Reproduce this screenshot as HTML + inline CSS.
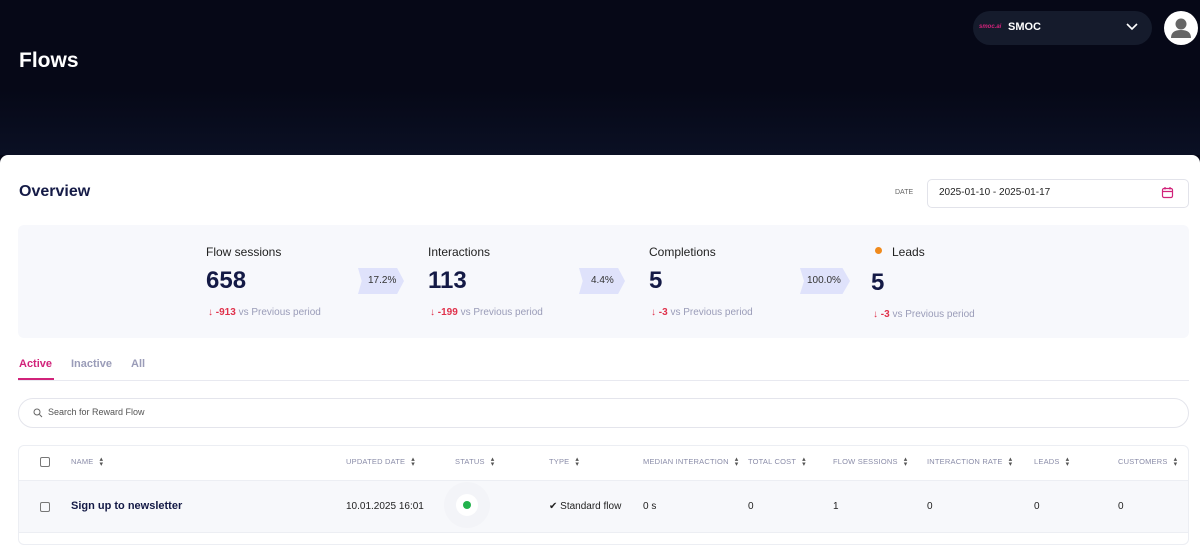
<!DOCTYPE html>
<html><head><meta charset="utf-8"><style>
*{box-sizing:border-box;margin:0;padding:0}
body{width:1200px;height:541px;overflow:hidden;background:#060817;font-family:"Liberation Sans",sans-serif;position:relative;color:#141a46}
.abs{position:absolute}
.panel{left:0;top:155px;width:1200px;height:400px;background:#fff;border-radius:8px 8px 0 0}
.lbl{font-size:12px;color:#222}
.num{font-size:24px;font-weight:bold;color:#141a46}
.cmp{font-size:10px;color:#9a9cb8}
.cmp b{color:#e0314b}
.arrow{background:#dfe2fb;font-size:10px;color:#333;height:26px;line-height:26px;padding-left:10px;width:46px;clip-path:polygon(0 0,85% 0,100% 50%,85% 100%,0 100%,8% 50%)}
.th{font-size:7.5px;color:#8a8ca8;top:457px;letter-spacing:.2px}
.td{font-size:10px;color:#222;top:501px}
.cb{width:10px;height:10px;border:1px solid #777;border-radius:2px}
.srt{font-size:7px;color:#555;line-height:5px;display:inline-block;vertical-align:middle;margin-left:6px}
</style></head><body>
<div class="abs" style="left:0;top:90px;width:1200px;height:65px;background:linear-gradient(#060817,#0b1024)"></div>
<div class="abs" style="left:19px;top:49px;font-size:21px;font-weight:bold;color:#fff">Flows</div>
<div class="abs" style="left:973px;top:11px;width:179px;height:34px;border-radius:17px;background:#151b2c"></div>
<div class="abs" style="left:979px;top:24px;font-size:6px;font-weight:bold;color:#d1237a;font-style:italic">smoc.ai</div>
<div class="abs" style="left:1008px;top:21px;font-size:11px;font-weight:bold;color:#fff">SMOC</div>
<svg class="abs" style="left:1125px;top:22px" width="14" height="10"><path d="M2 2 L7 7 L12 2" stroke="#fff" stroke-width="1.6" fill="none"/></svg>
<div class="abs" style="left:1164px;top:11px;width:34px;height:34px;border-radius:50%;background:#fff;overflow:hidden"><svg width="34" height="34"><circle cx="17" cy="13" r="5.5" fill="#666"/><path d="M7 27 Q7 19 17 19 Q27 19 27 27 Z" fill="#666"/></svg></div>
<div class="abs panel"></div>
<div class="abs" style="left:19px;top:183px;font-size:16px;font-weight:bold">Overview</div>
<div class="abs" style="left:895px;top:189px;font-size:7px;color:#666">DATE</div>
<div class="abs" style="left:927px;top:179px;width:262px;height:29px;border:1px solid #e2e3ea;border-radius:5px"></div>
<div class="abs" style="left:939px;top:187px;font-size:10px;color:#222">2025-01-10 - 2025-01-17</div>
<svg class="abs" style="left:1161px;top:186px" width="13" height="13"><rect x="1.5" y="2.5" width="10" height="9" rx="1.5" stroke="#d1237a" fill="none" stroke-width="1.2"/><path d="M1.5 5.5H11.5M4 1V3.5M9 1V3.5" stroke="#d1237a" stroke-width="1.2"/></svg>
<div class="abs" style="left:18px;top:225px;width:1171px;height:113px;background:#f7f8fc;border-radius:6px"></div>
<div class="abs lbl" style="left:206px;top:245px">Flow sessions</div>
<div class="abs num" style="left:206px;top:267px">658</div>
<div class="abs cmp" style="left:208px;top:307px"><b>↓ -913</b> vs Previous period</div>
<div class="abs arrow" style="left:358px;top:268px">17.2%</div>
<div class="abs lbl" style="left:428px;top:245px">Interactions</div>
<div class="abs num" style="left:428px;top:267px">113</div>
<div class="abs cmp" style="left:430px;top:307px"><b>↓ -199</b> vs Previous period</div>
<div class="abs arrow" style="left:579px;top:268px;padding-left:12px">4.4%</div>
<div class="abs lbl" style="left:649px;top:245px">Completions</div>
<div class="abs num" style="left:649px;top:267px">5</div>
<div class="abs cmp" style="left:651px;top:307px"><b>↓ -3</b> vs Previous period</div>
<div class="abs arrow" style="left:800px;top:268px;width:50px;padding-left:7px">100.0%</div>
<div class="abs" style="left:875px;top:247px;width:7px;height:7px;border-radius:50%;background:#f08a1c"></div>
<div class="abs lbl" style="left:892px;top:245px">Leads</div>
<div class="abs num" style="left:871px;top:269px">5</div>
<div class="abs cmp" style="left:873px;top:309px"><b>↓ -3</b> vs Previous period</div>
<div class="abs" style="left:18px;top:380px;width:1171px;height:1px;background:#e8e9f0"></div>
<div class="abs" style="left:19px;top:358px;font-size:11px;font-weight:bold;color:#d1237a">Active</div>
<div class="abs" style="left:18px;top:378px;width:36px;height:2px;background:#d1237a"></div>
<div class="abs" style="left:71px;top:358px;font-size:11px;font-weight:bold;color:#9a9cb8">Inactive</div>
<div class="abs" style="left:131px;top:358px;font-size:11px;font-weight:bold;color:#9a9cb8">All</div>
<div class="abs" style="left:18px;top:398px;width:1171px;height:30px;border:1px solid #e4e5ec;border-radius:15px"></div>
<svg class="abs" style="left:33px;top:408px" width="10" height="10"><circle cx="4" cy="4" r="3" stroke="#666" fill="none"/><path d="M6.5 6.5 9 9" stroke="#666"/></svg>
<div class="abs" style="left:48px;top:407px;font-size:9px;color:#555">Search for Reward Flow</div>
<div class="abs" style="left:18px;top:445px;width:1171px;height:100px;border:1px solid #eceef3;border-radius:6px"></div>
<div class="abs" style="left:19px;top:480px;width:1169px;height:53px;background:#f7f8fb;border-top:1px solid #eceef3;border-bottom:1px solid #eceef3"></div>
<div class="abs cb" style="left:40px;top:457px"></div>
<div class="abs cb" style="left:40px;top:502px"></div>
<div class="abs th" style="left:71px">NAME<span class="srt">▴<br>▾</span></div>
<div class="abs th" style="left:346px">UPDATED DATE<span class="srt">▴<br>▾</span></div>
<div class="abs th" style="left:455px">STATUS<span class="srt">▴<br>▾</span></div>
<div class="abs th" style="left:549px">TYPE<span class="srt">▴<br>▾</span></div>
<div class="abs th" style="left:643px">MEDIAN INTERACTION<span class="srt">▴<br>▾</span></div>
<div class="abs th" style="left:748px">TOTAL COST<span class="srt">▴<br>▾</span></div>
<div class="abs th" style="left:833px">FLOW SESSIONS<span class="srt">▴<br>▾</span></div>
<div class="abs th" style="left:927px">INTERACTION RATE<span class="srt">▴<br>▾</span></div>
<div class="abs th" style="left:1034px">LEADS<span class="srt">▴<br>▾</span></div>
<div class="abs th" style="left:1118px">CUSTOMERS<span class="srt">▴<br>▾</span></div>
<div class="abs" style="left:71px;top:500px;font-size:11px;font-weight:bold;color:#141a46">Sign up to newsletter</div>
<div class="abs td" style="left:346px">10.01.2025 16:01</div>
<div class="abs" style="left:456px;top:494px;width:22px;height:22px;border-radius:50%;background:#fff;box-shadow:0 0 0 12px rgba(235,236,242,.3)"></div>
<div class="abs" style="left:463px;top:501px;width:8px;height:8px;border-radius:50%;background:#22b24c"></div>
<div class="abs td" style="left:549px">✔ Standard flow</div>
<div class="abs td" style="left:643px">0 s</div>
<div class="abs td" style="left:748px">0</div>
<div class="abs td" style="left:833px">1</div>
<div class="abs td" style="left:927px">0</div>
<div class="abs td" style="left:1034px">0</div>
<div class="abs td" style="left:1118px">0</div>
</body></html>
